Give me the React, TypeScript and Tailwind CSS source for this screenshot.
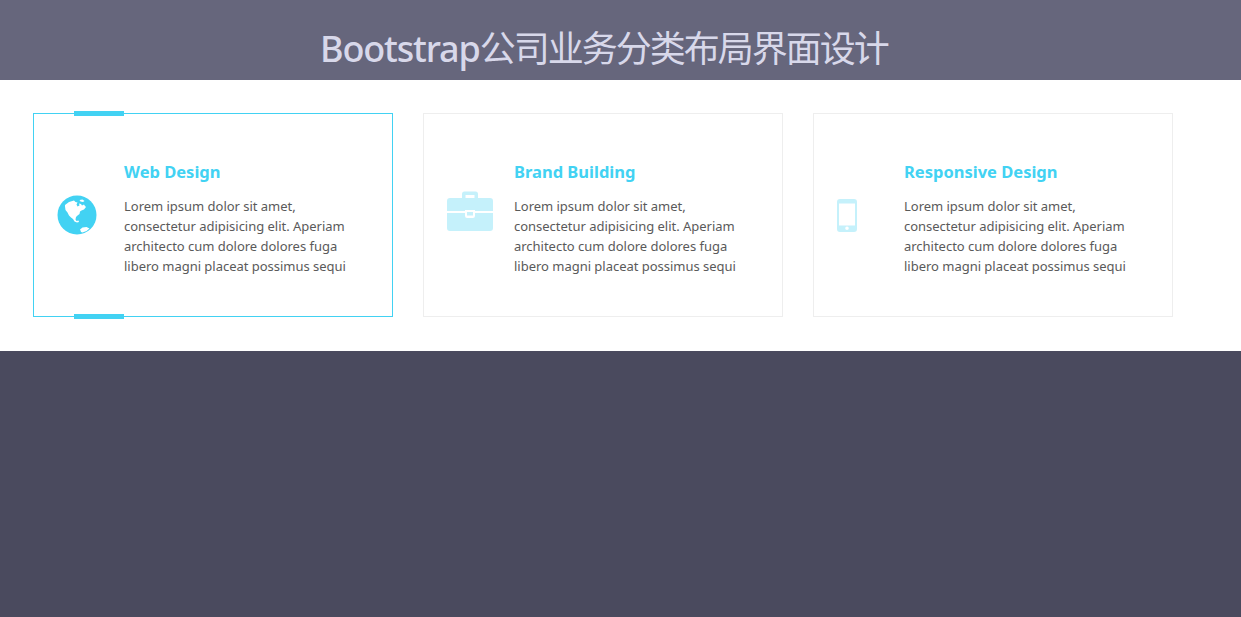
const FONT = '"Noto Sans", "Noto Sans CJK SC", sans-serif';

function GlobeIcon() {
  return (
    <svg width="40" height="40" viewBox="0 0 40 40" className="shrink-0">
      <circle cx="20" cy="20" r="19.5" fill="#42d2f3" />
      <path
        fill="#fff"
        d="M8 10l4-3 5-1.500 1.500 1.500 2 .5-1 2 1 2 2-1-.5-2 2 .5 1 1.500 2-1 1 1.500 1 1-2 2.500-2.500 1-1.500 1-.5 2.500-2 1.500-1.500 1.500-.5 2.500 1 1.500 2-.5.5 1.500-2 .5-2.500-1-1.500-2.500-2-1.500-2-2-1.500-3-2-2.500-.5-3.500z"
      />
      <path fill="#fff" d="M23 34.500l2.500-2 4-.5 3 1.500-3 2.500-4 1.500-1.500-.5-.5-1.500z" />
      <path fill="#fff" d="M22.500 5l3-.5 2 1.500-1.500 1-2.500-.5z" />
    </svg>
  );
}

function BriefcaseIcon() {
  return (
    <svg width="46" height="40" viewBox="0 0 46 40" className="shrink-0 -mt-[8px] opacity-30">
      <path
        fill="#42d2f3"
        fillRule="evenodd"
        d="M15 7V3a2.500 2.500 0 0 1 2.500-2.500h11A2.500 2.500 0 0 1 31 3v4h-3.500V4h-9v3zM3 7h40a3 3 0 0 1 3 3v10H28v-1h-10v1H0V10a3 3 0 0 1 3-3z"
      />
      <path
        fill="#42d2f3"
        fillRule="evenodd"
        d="M0 22h18v3a2 2 0 0 0 2 2h6a2 2 0 0 0 2-2v-3h18v15a3 3 0 0 1-3 3H3a3 3 0 0 1-3-3z"
      />
      <rect x="20" y="21" width="6" height="3.500" fill="#42d2f3" />
    </svg>
  );
}

function PhoneIcon() {
  return (
    <svg width="20" height="33" viewBox="0 0 20 33" className="shrink-0 opacity-30">
      <path
        fill="#42d2f3"
        fillRule="evenodd"
        d="M3 0h14a3 3 0 0 1 3 3v27a3 3 0 0 1-3 3H3a3 3 0 0 1-3-3V3a3 3 0 0 1 3-3zM2 4.500v22h16v-22zM10 27.500a1.800 1.800 0 1 0 0 3.600 1.800 1.800 0 0 0 0-3.600z"
      />
    </svg>
  );
}

const CARDS = [
  { title: 'Web Design', icon: <GlobeIcon />, active: true },
  { title: 'Brand Building', icon: <BriefcaseIcon />, active: false },
  { title: 'Responsive Design', icon: <PhoneIcon />, active: false },
];

export default function App() {
  return (
    <div className="min-h-[617px] bg-[#4a4a5e]" style={{ fontFamily: FONT }}>
      <header className="h-20 bg-[#66667c] pl-[320px] pt-[26px]">
        <h1 className="text-[36px] leading-[46px] font-medium text-[#d8d8ea] whitespace-nowrap">
          <span className="tracking-[-1.150px]">Bootstrap</span>
          <span className="font-normal tracking-[-2px]">公司业务分类布局界面设计</span>
        </h1>
      </header>

      <section className="flex gap-[30px] bg-white pl-[33px] pt-[33px] pb-[34px]">
        {CARDS.map(card => (
          <div
            key={card.title}
            className={`relative flex h-[204px] w-[360px] items-center border ${card.active ? 'border-[#42d2f3]' : 'border-[#eeeeee]'}`}
          >
            {card.active && (
              <>
                <span className="absolute -top-[3px] left-[40px] h-[5px] w-[50px] bg-[#42d2f3]" />
                <span className="absolute -bottom-[3px] left-[40px] h-[5px] w-[50px] bg-[#42d2f3]" />
              </>
            )}
            <div className="flex w-[90px] shrink-0 items-center pl-[23px]">{card.icon}</div>
            <div className="w-[240px] pt-[5px]">
              <h3 className="text-[16.500px] leading-[24px] font-bold text-[#42d2f3]">{card.title}</h3>
              <p className="mt-[12px] text-[13px] leading-[20px] tracking-[-0.020px] text-[#5a5a5a]">
                Lorem ipsum dolor sit amet,
                <br />
                consectetur adipisicing elit. Aperiam
                <br />
                architecto cum dolore dolores fuga
                <br />
                libero magni placeat possimus sequi
              </p>
            </div>
          </div>
        ))}
      </section>
    </div>
  );
}
